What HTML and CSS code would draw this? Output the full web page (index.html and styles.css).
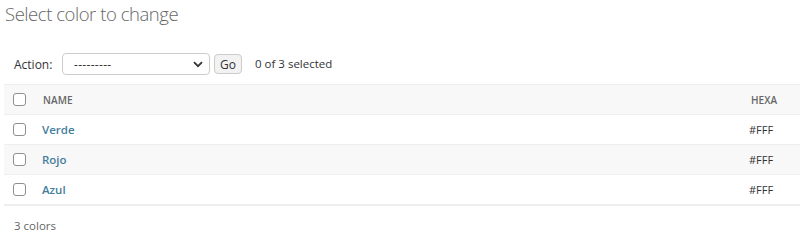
FILE: index.html
```html
<!DOCTYPE html>
<html>
<head>
<meta charset="utf-8">
<link rel="stylesheet" href="styles.css">
</head>
<body>
<h1 class="title">Select color to change</h1>
<div class="actions">
  <span class="label">Action:</span>
  <span class="select"><span class="select-text">---------</span>
    <svg class="chev" width="10" height="7" viewBox="0 0 10 7"><path d="M1 1.2 L5 5.2 L9 1.2" fill="none" stroke="#333" stroke-width="1.8"/></svg>
  </span>
  <span class="go">Go</span>
  <span class="counter">0 of 3 selected</span>
</div>
<table class="results">
  <thead>
    <tr>
      <th class="cb"><span class="box"></span></th>
      <th class="name">NAME</th>
      <th class="hexa">HEXA</th>
    </tr>
  </thead>
  <tbody>
    <tr><td class="cb"><span class="box"></span></td><td class="name"><a href="#">Verde</a></td><td class="hexa">#FFF</td></tr>
    <tr class="alt"><td class="cb"><span class="box"></span></td><td class="name"><a href="#">Rojo</a></td><td class="hexa">#FFF</td></tr>
    <tr><td class="cb"><span class="box"></span></td><td class="name"><a href="#">Azul</a></td><td class="hexa">#FFF</td></tr>
  </tbody>
</table>
<p class="paginator">3 colors</p>
</body>
</html>
```

FILE: styles.css
```css
html, body {
  margin: 0;
  padding: 0;
  background: #fff;
  font-family: "Open Sans", "Noto Sans", sans-serif;
  color: #333;
}
.title {
  margin: 0;
  padding: 0 0 0 5px;
  font-size: 18.5px;
  font-weight: 300;
  line-height: 28px;
  color: #666;
  letter-spacing: -0.45px;
}
.actions {
  display: flex;
  align-items: center;
  height: 24px;
  margin-top: 24px;
  padding-left: 14px;
  font-size: 12px;
}
.label {
  color: #333;
  width: 48px;
}
.select {
  display: flex;
  align-items: center;
  justify-content: space-between;
  box-sizing: border-box;
  width: 148px;
  height: 22px;
  border: 1px solid #ccc;
  border-radius: 4px;
  padding: 0 6px 0 11px;
  color: #333;
  font-size: 12px;
}
.select-text { letter-spacing: 0.3px; }
.go {
  display: flex;
  align-items: center;
  justify-content: center;
  box-sizing: border-box;
  width: 28px;
  height: 20px;
  margin-left: 4px;
  border: 1px solid #ccc;
  border-radius: 4px;
  background: #f2f2f2;
  font-size: 12px;
  color: #333;
}
.counter {
  margin-left: 13px;
  color: #333;
  font-size: 11.5px;
  position: relative;
  top: -1px;
}
.results {
  margin: 8px 0 0 4px;
  width: calc(100% - 4px);
  border-collapse: collapse;
  font-size: 12px;
}
.results th, .results td {
  height: 29px;
  padding: 0;
  border-bottom: 1px solid #eee;
  vertical-align: middle;
  text-align: left;
}
.results thead th {
  background: #f8f8f8;
  border-top: 1px solid #eee;
  font-size: 10px;
  font-weight: 600;
  color: #666;
  letter-spacing: 0.1px;
}
.results tbody tr:last-child td { border-bottom: 2px solid #eee; }
.results tr.alt td { background: #f8f8f8; }
.cb { width: 30px; padding-left: 9px !important; box-sizing: border-box; }
.box {
  display: block;
  box-sizing: border-box;
  width: 13px;
  height: 13px;
  border: 1px solid #8f8f8f;
  border-radius: 3px;
  background: #fff;
}
th.name { padding-left: 9px !important; }
td.name { padding-left: 8px !important; }
.name a {
  color: #447e9b;
  font-weight: 600;
  text-decoration: none;
  font-size: 11.5px;
}
.hexa { width: 49px; }
th.hexa { padding-left: 10px !important; }
td.hexa { padding-left: 8px !important; font-size: 11px; color: #333; }
.paginator {
  margin: 10px 0 0 14px;
  font-size: 11.5px;
  color: #666;
  line-height: 20px;
}
```
